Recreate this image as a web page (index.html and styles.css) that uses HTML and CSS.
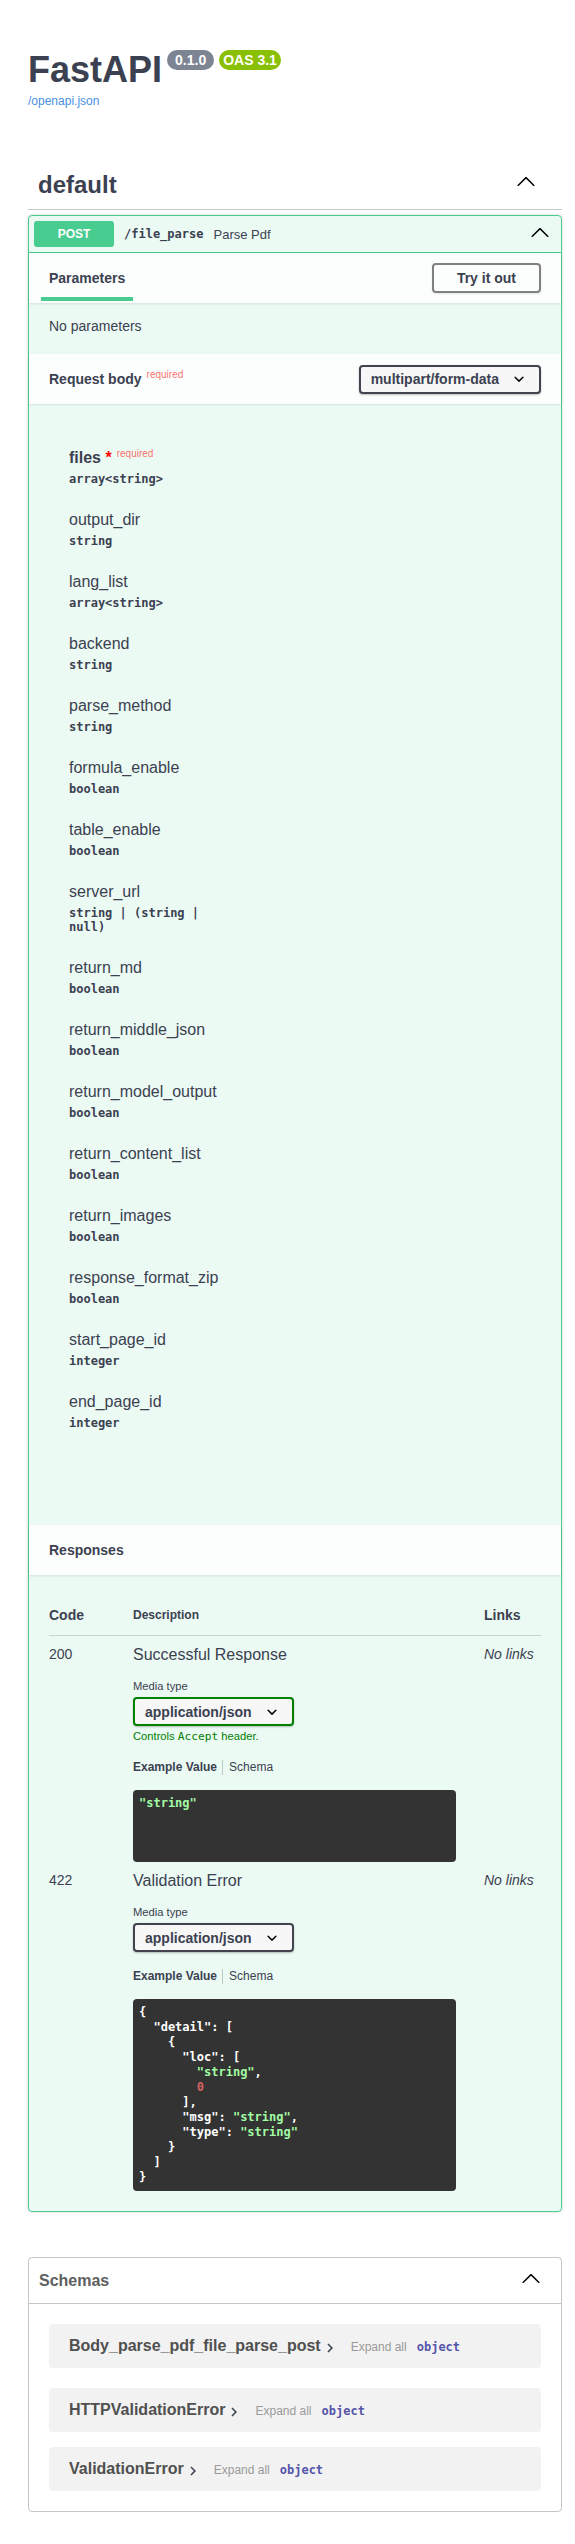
FILE: index.html
```html
<!DOCTYPE html>
<html lang="en">
<head>
<meta charset="utf-8">
<title>FastAPI - Swagger UI</title>
<link rel="stylesheet" href="styles.css">
</head>
<body>
<div class="wrapper">
  <header class="info">
    <h2 class="title">FastAPI<span class="badge badge-version">0.1.0</span><span class="badge badge-oas">OAS 3.1</span></h2>
    <a class="spec-link" href="#">/openapi.json</a>
  </header>

  <section class="tag-section">
    <div class="tag-header">
      <h3 class="tag-name">default</h3>
      <svg class="arrow tag-arrow" width="20" height="20" viewBox="0 0 20 20"><path d="M17.418 14.908c.27.268.707.268.979 0s.271-.701 0-.969l-7.908-7.83c-.27-.268-.707-.268-.979 0l-7.908 7.83c-.27.268-.27.701 0 .969.271.268.709.268.979 0L10 7.75l7.418 7.158z"/></svg>
    </div>

    <div class="opblock">
      <div class="summary">
        <span class="method">POST</span>
        <span class="path">/file_parse</span>
        <span class="summary-desc">Parse Pdf</span>
        <svg class="arrow summary-arrow" width="20" height="20" viewBox="0 0 20 20"><path d="M17.418 14.908c.27.268.707.268.979 0s.271-.701 0-.969l-7.908-7.83c-.27-.268-.707-.268-.979 0l-7.908 7.83c-.27.268-.27.701 0 .969.271.268.709.268.979 0L10 7.75l7.418 7.158z"/></svg>
      </div>

      <div class="section-header">
        <div class="tab-title">Parameters</div>
        <button class="try-btn" type="button">Try it out</button>
      </div>
      <div class="no-params"><p>No parameters</p></div>

      <div class="section-header">
        <h4 class="section-title">Request body<span class="req-flag">required</span></h4>
        <div class="select">multipart/form-data<svg width="20" height="20" viewBox="0 0 20 20"><path d="M13.418 7.859a.695.695 0 0 1 .978 0 .68.68 0 0 1 0 .969l-3.908 3.83a.697.697 0 0 1-.979 0l-3.908-3.83a.68.68 0 0 1 0-.969.695.695 0 0 1 .978 0L10 11l3.418-3.141z"/></svg></div>
      </div>

      <div class="body-params">
        <div class="param"><div class="param-name required">files<span class="star">&nbsp;*</span><span class="req-flag">required</span></div><div class="param-type">array&lt;string&gt;</div></div>
        <div class="param"><div class="param-name">output_dir</div><div class="param-type">string</div></div>
        <div class="param"><div class="param-name">lang_list</div><div class="param-type">array&lt;string&gt;</div></div>
        <div class="param"><div class="param-name">backend</div><div class="param-type">string</div></div>
        <div class="param"><div class="param-name">parse_method</div><div class="param-type">string</div></div>
        <div class="param"><div class="param-name">formula_enable</div><div class="param-type">boolean</div></div>
        <div class="param"><div class="param-name">table_enable</div><div class="param-type">boolean</div></div>
        <div class="param"><div class="param-name">server_url</div><div class="param-type">string | (string | null)</div></div>
        <div class="param"><div class="param-name">return_md</div><div class="param-type">boolean</div></div>
        <div class="param"><div class="param-name">return_middle_json</div><div class="param-type">boolean</div></div>
        <div class="param"><div class="param-name">return_model_output</div><div class="param-type">boolean</div></div>
        <div class="param"><div class="param-name">return_content_list</div><div class="param-type">boolean</div></div>
        <div class="param"><div class="param-name">return_images</div><div class="param-type">boolean</div></div>
        <div class="param"><div class="param-name">response_format_zip</div><div class="param-type">boolean</div></div>
        <div class="param"><div class="param-name">start_page_id</div><div class="param-type">integer</div></div>
        <div class="param"><div class="param-name">end_page_id</div><div class="param-type">integer</div></div>
      </div>

      <div class="section-header">
        <h4 class="section-title">Responses</h4>
      </div>

      <div class="responses">
        <table class="resp-table">
          <thead>
            <tr>
              <th class="col-code">Code</th>
              <th class="col-desc">Description</th>
              <th class="col-links">Links</th>
            </tr>
          </thead>
          <tbody>
            <tr>
              <td class="resp-code">200</td>
              <td class="resp-desc">
                <div class="resp-desc-text">Successful Response</div>
                <span class="media-label">Media type</span>
                <div class="select select-ok">application/json<svg width="20" height="20" viewBox="0 0 20 20"><path d="M13.418 7.859a.695.695 0 0 1 .978 0 .68.68 0 0 1 0 .969l-3.908 3.830a.697.697 0 0 1-.979 0l-3.908-3.830a.68.68 0 0 1 0-.969.695.695 0 0 1 .978 0L10 11l3.418-3.141z"/></svg></div>
                <div class="accept-msg">Controls <code>Accept</code> header.</div>
                <ul class="ex-tabs"><li class="active">Example Value</li><li>Schema</li></ul>
                <div class="code">
                  <div class="ln"><span class="s">"string"</span></div>
                </div>
              </td>
              <td class="resp-links">No links</td>
            </tr>
            <tr>
              <td class="resp-code">422</td>
              <td class="resp-desc">
                <div class="resp-desc-text">Validation Error</div>
                <span class="media-label">Media type</span>
                <div class="select">application/json<svg width="20" height="20" viewBox="0 0 20 20"><path d="M13.418 7.859a.695.695 0 0 1 .978 0 .68.68 0 0 1 0 .969l-3.908 3.83a.697.697 0 0 1-.979 0l-3.908-3.83a.68.68 0 0 1 0-.969.695.695 0 0 1 .978 0L10 11l3.418-3.141z"/></svg></div>
                <ul class="ex-tabs"><li class="active">Example Value</li><li>Schema</li></ul>
                <div class="code">
                  <div class="ln">{</div>
                  <div class="ln i1">"detail": [</div>
                  <div class="ln i2">{</div>
                  <div class="ln i3">"loc": [</div>
                  <div class="ln i4"><span class="s">"string"</span><span>,</span></div>
                  <div class="ln i4"><span class="n">0</span></div>
                  <div class="ln i3">],</div>
                  <div class="ln i3"><span>"msg": </span><span class="s">"string"</span><span>,</span></div>
                  <div class="ln i3"><span>"type": </span><span class="s">"string"</span></div>
                  <div class="ln i2">}</div>
                  <div class="ln i1">]</div>
                  <div class="ln">}</div>
                </div>
              </td>
              <td class="resp-links">No links</td>
            </tr>
          </tbody>
        </table>
      </div>
    </div>
  </section>

  <section class="models">
    <div class="models-header">
      <h4 class="models-title">Schemas</h4>
      <svg class="arrow" width="20" height="20" viewBox="0 0 20 20"><path d="M17.418 14.908c.27.268.707.268.979 0s.271-.701 0-.969l-7.908-7.83c-.27-.268-.707-.268-.979 0l-7.908 7.83c-.27.268-.27.701 0 .969.271.268.709.268.979 0L10 7.75l7.418 7.158z"/></svg>
    </div>
    <div class="model-list">
      <div class="model">
        <span class="model-title">Body_parse_pdf_file_parse_post</span>
        <svg class="model-toggle" width="18" height="18" viewBox="0 0 24 24"><path d="M10 6 8.59 7.41 13.17 12l-4.58 4.59L10 18l6-6z"/></svg>
        <span class="expand-all">Expand all</span>
        <span class="prop-type">object</span>
      </div>
      <div class="model">
        <span class="model-title">HTTPValidationError</span>
        <svg class="model-toggle" width="18" height="18" viewBox="0 0 24 24"><path d="M10 6 8.59 7.41 13.17 12l-4.58 4.59L10 18l6-6z"/></svg>
        <span class="expand-all">Expand all</span>
        <span class="prop-type">object</span>
      </div>
      <div class="model">
        <span class="model-title">ValidationError</span>
        <svg class="model-toggle" width="18" height="18" viewBox="0 0 24 24"><path d="M10 6 8.59 7.41 13.17 12l-4.58 4.59L10 18l6-6z"/></svg>
        <span class="expand-all">Expand all</span>
        <span class="prop-type">object</span>
      </div>
    </div>
  </section>
</div>
</body>
</html>
```
FILE: styles.css
```css
* { box-sizing: border-box; }

html, body {
  margin: 0;
  padding: 0;
  background: #fff;
}

body {
  font-family: "Liberation Sans", Arial, Helvetica, sans-serif;
  color: #3b4151;
}

.wrapper {
  margin-left: 28px;
  width: 534px;
  padding-top: 48px;
  padding-bottom: 30px;
}

/* ---------- info ---------- */
.title {
  margin: 0;
  font-size: 36px;
  line-height: 44px;
  font-weight: 700;
  color: #3b4151;
}

.badge {
  display: inline-block;
  vertical-align: top;
  margin: 2px 0 0 5px;
  height: 20px;
  line-height: 20px;
  border-radius: 57px;
  font-size: 14px;
  font-weight: 700;
  color: #fff;
}

.badge-version { background: #7d8492; padding: 0 8px; }
.badge-oas { background: #89bf04; padding: 0 4px; }

.spec-link {
  display: block;
  margin-top: 2px;
  font-size: 12px;
  line-height: 14px;
  color: #4990e2;
  text-decoration: none;
}

/* ---------- tag ---------- */
.tag-section { margin-top: 52px; }

.tag-header {
  display: flex;
  align-items: flex-start;
  padding: 10px 26px 10px 10px;
  border-bottom: 1px solid rgba(59, 65, 81, .3);
  margin-bottom: 5px;
}

.tag-name {
  flex: 1;
  margin: 0;
  font-size: 24px;
  line-height: 29px;
  font-weight: 700;
}

.arrow { fill: #000; flex-shrink: 0; }
.tag-arrow { margin-top: 1px; }

/* ---------- opblock ---------- */
.opblock {
  border: 1px solid #49cc90;
  border-radius: 4px;
  background: rgba(73, 204, 144, .1);
  box-shadow: 0 0 3px rgba(0, 0, 0, .19);
}

.summary {
  display: flex;
  align-items: center;
  padding: 5px;
  border-bottom: 1px solid #49cc90;
}

.method {
  min-width: 80px;
  padding: 6px 0;
  text-align: center;
  font-size: 12px;
  line-height: 14px;
  font-weight: 700;
  color: #fff;
  background: #49cc90;
  border-radius: 3px;
}

.path {
  padding: 0 10px;
  font-family: "DejaVu Sans Mono", "Liberation Mono", monospace;
  font-size: 12px;
  font-weight: 700;
}

.summary-desc {
  flex: 1;
  font-size: 13px;
}

.summary-arrow { margin: 0 6px 4px 0; }

.section-header {
  display: flex;
  align-items: center;
  justify-content: space-between;
  min-height: 50px;
  padding: 8px 20px;
  background: rgba(255, 255, 255, .8);
  box-shadow: 0 1px 2px rgba(0, 0, 0, .1);
}

.tab-title {
  position: relative;
  font-size: 14px;
  line-height: 16px;
  font-weight: 700;
}

.tab-title::after {
  content: "";
  position: absolute;
  left: -10%;
  width: 120%;
  bottom: -15px;
  height: 4px;
  background: #49cc90;
}

.try-btn {
  font-family: "Liberation Sans", Arial, sans-serif;
  font-size: 14px;
  line-height: 16px;
  font-weight: 700;
  color: #3b4151;
  padding: 5px 23px;
  border: 2px solid #808080;
  border-radius: 4px;
  background: transparent;
  box-shadow: 0 1px 2px rgba(0, 0, 0, .1);
}

.no-params { padding: 15px 20px; }

.no-params p {
  margin: 0 0 5px;
  font-size: 14px;
  line-height: 16px;
}

.section-title {
  margin: 0;
  font-size: 14px;
  line-height: 16px;
  font-weight: 700;
}

.req-flag {
  position: relative;
  top: -6px;
  padding: 5px;
  font-size: 10px;
  line-height: 10px;
  font-weight: 400;
  color: rgba(255, 0, 0, .6);
}

.select {
  display: flex;
  align-items: center;
  width: max-content;
  height: 29px;
  padding: 0 10px;
  border: 2px solid #41444e;
  border-radius: 4px;
  background: #f7f7f7;
  box-shadow: 0 1px 2px rgba(0, 0, 0, .25);
  font-size: 14px;
  font-weight: 700;
  color: #3b4151;
}

.select svg { margin-left: 10px; fill: #000; }
.select-ok { border-color: #008000; }

/* ---------- body params ---------- */
.body-params { padding: 35px 20px 80px 40px; }

.param {
  width: 150px;
  padding: 10px 0;
}

.param-name {
  height: 18px;
  font-size: 16px;
  line-height: 18px;
  white-space: nowrap;
}

.param-name.required { font-weight: 700; }
.star { color: red; }

.param-type {
  padding: 5px 0;
  font-family: "DejaVu Sans Mono", "Liberation Mono", monospace;
  font-size: 12px;
  line-height: 14px;
  font-weight: 700;
}

/* ---------- responses ---------- */
.responses { padding: 20px; }

.resp-table {
  width: 100%;
  border-collapse: separate;
  border-spacing: 0;
  table-layout: fixed;
}

.resp-table th {
  padding: 12px 0;
  text-align: left;
  font-size: 12px;
  line-height: 16px;
  font-weight: 700;
  vertical-align: top;
  border-bottom: 1px solid rgba(59, 65, 81, .2);
}

.resp-table th.col-code { width: 84px; font-size: 14px; }
.resp-table th.col-desc { width: 323px; }
.resp-table th.col-links { width: 85px; padding-left: 28px; font-size: 14px; }

.resp-table td {
  padding: 10px 0 0;
  vertical-align: top;
}

.resp-code {
  font-size: 14px;
  line-height: 16px;
}

.resp-desc-text {
  font-size: 16px;
  line-height: 18px;
}

.resp-table td.resp-links {
  padding-left: 28px;
  font-size: 14px;
  line-height: 16px;
  font-style: italic;
}

.media-label {
  display: block;
  margin: 16px 0 4px;
  font-size: 11.2px;
  line-height: 13px;
}

.accept-msg {
  margin-top: 4px;
  font-size: 11.2px;
  line-height: 13px;
  color: #008000;
}

.accept-msg code {
  font-family: "DejaVu Sans Mono", "Liberation Mono", monospace;
  font-size: 11.2px;
}

.ex-tabs {
  display: flex;
  margin: 17px 0 0;
  padding: 0;
  list-style: none;
  font-size: 12px;
  line-height: 15px;
}

.ex-tabs li:first-child {
  position: relative;
  padding-right: 12px;
}

.ex-tabs li:first-child::after {
  content: "";
  position: absolute;
  top: 0;
  right: 6px;
  width: 1px;
  height: 100%;
  background: rgba(0, 0, 0, .2);
}

.ex-tabs li.active { font-weight: 700; }

.code {
  margin: 15px 0 0;
  padding: 6px;
  min-height: 72px;
  background: #333;
  border-radius: 4px;
  color: #fff;
  font-family: "DejaVu Sans Mono", "Liberation Mono", monospace;
  font-size: 12px;
  line-height: 15px;
  font-weight: 700;
}

.code .ln { height: 15px; white-space: pre; }
.code .i1 { padding-left: 14.45px; }
.code .i2 { padding-left: 28.9px; }
.code .i3 { padding-left: 43.35px; }
.code .i4 { padding-left: 57.8px; }
.code .s { color: #a2fca2; }
.code .n { color: #d36363; }

/* ---------- models ---------- */
.models {
  margin-top: 45px;
  border: 1px solid rgba(59, 65, 81, .3);
  border-radius: 4px;
}

.models-header {
  display: flex;
  align-items: flex-start;
  padding: 10px 20px 10px 10px;
  border-bottom: 1px solid rgba(59, 65, 81, .3);
}

.models-title {
  flex: 1;
  margin: 0;
  font-size: 16px;
  line-height: 25px;
  font-weight: 700;
  color: #606060;
}

.model-list { padding: 20px; }

.model {
  display: flex;
  align-items: baseline;
  height: 44px;
  padding: 10px 20px 0;
  margin-bottom: 15px;
  background: rgba(0, 0, 0, .05);
  border-radius: 4px;
  line-height: 24px;
}

.model:first-child { margin-bottom: 20px; }
.model:last-child { margin-bottom: 0; }

.model-title {
  font-size: 16px;
  font-weight: 700;
  color: #505050;
}

.model-toggle {
  align-self: center;
  margin-top: -7px;
  fill: #3b4151;
}

.expand-all {
  margin-left: 12px;
  font-size: 12px;
  color: #9a9a9a;
}

.prop-type {
  margin-left: 10px;
  font-family: "DejaVu Sans Mono", "Liberation Mono", monospace;
  font-size: 12px;
  font-weight: 700;
  color: #55a;
}
```
